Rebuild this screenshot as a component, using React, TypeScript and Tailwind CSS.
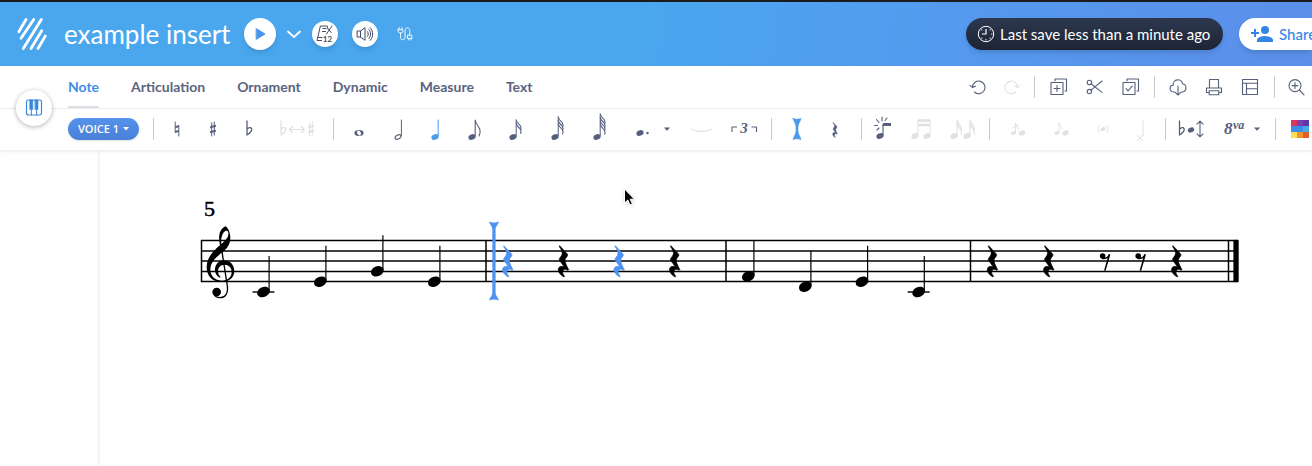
import type { ReactNode } from 'react';

const BLUE = '#4f93f2';

// Every glyph is drawn around its own centre in a 40x40 box.
function Glyph({ children }: { children: ReactNode }) {
  return (
    <svg
      viewBox="-20 -20 40 40"
      className="h-10 w-10 shrink-0 overflow-visible"
      fill="none"
      stroke="currentColor"
      strokeLinecap="round"
      strokeLinejoin="round"
      aria-hidden="true"
    >
      {children}
    </svg>
  );
}

interface ToolProps {
  label: string;
  width?: string;
  disabled?: boolean;
  active?: boolean;
  children: ReactNode;
}

function Tool({ label, width = 'w-9', disabled, active, children }: ToolProps) {
  const color = disabled ? 'text-[#e0e1e4]' : active ? 'text-[#4a9bea]' : 'text-[#56607c]';
  return (
    <button
      type="button"
      aria-label={label}
      disabled={disabled}
      className={`flex h-10 shrink-0 items-center justify-center ${width} ${color}`}
    >
      <Glyph>{children}</Glyph>
    </button>
  );
}

function Separator({ width = 'w-3' }: { width?: string }) {
  return (
    <div className={`flex shrink-0 justify-center ${width}`}>
      <div className="h-[22px] w-px bg-[#c9cbd1]" />
    </div>
  );
}

function Head({ x = 0, y = 0, size = 1 }: { x?: number; y?: number; size?: number }) {
  return (
    <ellipse
      rx={3.7 * size}
      ry={2.7 * size}
      transform={`translate(${x} ${y}) rotate(-22)`}
      fill="currentColor"
      stroke="none"
    />
  );
}

function Caret() {
  return <path d="M-3 -1.4H3L0 1.8Z" fill="currentColor" stroke="none" />;
}

function Flat({ x = 0 }: { x?: number }) {
  return (
    <path
      transform={`translate(${x} 0)`}
      d="M-2 -8V6C1 4 3.4 1.8 2.6 -.4C1.8 -2 -.8 -1.4 -2 .4"
      strokeWidth="1.3"
    />
  );
}

function Sharp({ x = 0 }: { x?: number }) {
  return (
    <g transform={`translate(${x} 0)`}>
      <path d="M-1.3 -6.2V7M1.3 -7V6.2" strokeWidth="1" />
      <path d="M-2.9 -1.6L2.9 -3.2M-2.9 3.2L2.9 1.6" strokeWidth="2" strokeLinecap="butt" />
    </g>
  );
}

function FlaggedNote({ flags, top }: { flags: number; top: number }) {
  return (
    <>
      <Head x={-3} y={8} />
      <path d={`M.2 7V${top}`} strokeWidth="1" />
      {Array.from({ length: flags }).map((_, i) => (
        <path
          key={i}
          d={`M.3 ${top + i * 3.4}C1 ${top + 4 + i * 3.4} 4 ${top + 4 + i * 3.4} 4.8 ${top + 7 + i * 3.4}C5.2 ${top + 8 + i * 3.4} 5.2 ${top + 9 + i * 3.4} 4.6 ${top + 10 + i * 3.4}`}
          strokeWidth="1.1"
        />
      ))}
    </>
  );
}

const REST_PATH =
  'M-11 -47L12 -22C14 -19 13 -16 10 -13C2 -4 4 2 16 25L14 27C6 22 0 24 -2 30C-3 36 0 41 4 45L2 47C-10 41 -16 31 -15 23C-13 15 -5 13 3 17L-10 -1C-13 -5 -13 -7 -9 -12C0 -22 -2 -30 -12 -44Z';

function TopBar() {
  return (
    <header className="flex h-16 items-center bg-[linear-gradient(100deg,#4aa7ee_0%,#4aa7ee_48%,#5598ee_76%,#5b8fea_100%)] pl-4 text-white">
      <a href="#" aria-label="Home" className="mr-4 flex w-8 shrink-0 items-center justify-center">
        <svg viewBox="0 0 32 34" className="h-[34px] w-8" fill="none" stroke="#fff" strokeWidth="2.8" strokeLinecap="round" aria-hidden="true">
          <path d="M10 2.500L2.800 14.700M17.700 2.500L5 21.300M25.300 2.500L7.300 31.500M25.700 13.700L15 31.500M29.300 19L22 31.500" />
        </svg>
      </a>
      <h1 className="w-[164px] shrink-0 whitespace-nowrap text-[26px] leading-8">example insert</h1>

      <button type="button" aria-label="Play" className="ml-4 flex size-8 shrink-0 items-center justify-center rounded-full bg-white text-[#4793ee] shadow-md">
        <Glyph>
          <path d="M-3.5 -5.2L5 0L-3.5 5.2Z" fill="currentColor" strokeWidth="1" />
        </Glyph>
      </button>
      <button type="button" aria-label="Playback options" className="flex w-9 shrink-0 items-center justify-center">
        <Glyph>
          <path d="M-6 -2.5L0 3L6 -2.5" strokeWidth="1.8" />
        </Glyph>
      </button>
      <button type="button" aria-label="Metronome" className="flex size-[26px] shrink-0 items-center justify-center rounded-full bg-white text-[#414a66] shadow-md">
        <Glyph>
          <path d="M-3.500 6.500H-8L-4.600 -8H2.200L3 -5M-6.800 3.500H-3M-2 -5.500H1M-2.500 -2.500H.5M7 -8L1.500 0M3.400 -4.800L6.200 -1.500" strokeWidth="1" />
          <text x="-2.2" y="8.2" fontSize="8" fontWeight="700" fill="currentColor" stroke="none">12</text>
        </Glyph>
      </button>
      <button type="button" aria-label="Volume" className="ml-[14px] flex size-[26px] shrink-0 items-center justify-center rounded-full bg-white text-[#414a66] shadow-md">
        <Glyph>
          <path d="M-7.5 -3H-4.5L0 -6.3V6.3L-4.5 3H-7.5ZM-4.5 -3V3M2.4 -2.4C3.6 -1 3.6 1 2.4 2.4M3.8 -4.6C6.2 -2 6.2 2 3.8 4.6M5.2 -6.4C8.5 -3 8.5 3 5.2 6.4" strokeWidth="1" />
        </Glyph>
      </button>
      <button type="button" aria-label="MIDI device" className="ml-[11px] flex w-8 shrink-0 items-center justify-center text-white/90">
        <Glyph>
          <path d="M-6 -6.5V-4.5M-3 -6.5V-4.5M-6.8 -4.3H-2.2V-2C-2.2 -.8 -6.8 -.8 -6.8 -2ZM-4.5 -1V3.5C-4.5 6.5 0 6.5 0 3.5V-3.5C0 -7 4.8 -7 4.8 -3.5V.8M2.8 1.2H6.8V4.4H2.8ZM3.6 4.6V6M6 4.6V6" strokeWidth="1" />
        </Glyph>
      </button>

      <div className="ml-auto flex shrink-0 items-center gap-4">
        <div className="flex h-8 w-[257px] items-center gap-1.5 whitespace-nowrap rounded-full bg-linear-to-b from-[#2d3850] to-[#1d2434] pl-3 text-[15px] shadow-md">
          <svg viewBox="-8 -8 16 16" className="size-4 shrink-0 overflow-visible" fill="none" stroke="#fff" aria-hidden="true">
            <circle r="7.7" strokeWidth="1" />
            <path d="M0 -5V0H-4" strokeWidth="1.2" />
            <path d="M4.2 -4.2L4.3 -4.1M5.6 0H5.8M4.1 4.1L4.2 4.2M0 5.6V5.8M-4.2 4.1L-4.1 4.2M-4.2 -4.2L-4.1 -4.1" strokeWidth="1.2" strokeLinecap="round" />
          </svg>
          Last save less than a minute ago
        </div>
        <button type="button" className="flex h-8 w-[73px] items-center gap-1.5 overflow-hidden whitespace-nowrap rounded-l-full bg-white pl-3 text-[15px] font-medium text-[#3585e6] shadow-md">
          <svg viewBox="0 0 22 16" className="h-4 w-[22px] shrink-0" fill="currentColor" aria-hidden="true">
            <circle cx="14" cy="4" r="4" />
            <path d="M6 16V14C6 11.3 11.3 10 14 10S22 11.3 22 14V16ZM3 3H5V6H8V8H5V11H3V8H0V6H3Z" />
          </svg>
          Share
        </button>
      </div>
    </header>
  );
}

const TABS = ['Note', 'Articulation', 'Ornament', 'Dynamic', 'Measure', 'Text'];

function TabRow() {
  return (
    <div className="flex h-[42px] items-center pl-[68px]">
      <nav className="flex h-full gap-8 text-[14px] font-bold text-[#5b6480]">
        {TABS.map((tab) => (
          <a
            key={tab}
            href="#"
            className={
              tab === 'Note'
                ? 'flex items-center border-b-2 border-[#dcdee3] text-[#3f8ee6]'
                : 'flex items-center border-b-2 border-transparent'
            }
          >
            {tab}
          </a>
        ))}
      </nav>
      <div className="ml-auto flex items-center">
        <Tool label="Undo">
          <path d="M-5.6 0A6.3 6.3 0 1 1 -3.6 5M-8 -1.6L-5.4 .6L-2.6 -1" strokeWidth="1.1" />
        </Tool>
        <Tool label="Redo" width="w-8" disabled>
          <path d="M5.6 0A6.3 6.3 0 1 0 3.6 5M8 -1.6L5.4 .6L2.6 -1" strokeWidth="1.1" />
        </Tool>
        <Separator />
        <Tool label="Duplicate">
          <path d="M-7 -4.5H5V7.5H-7ZM-3 -8H8.5V4H7M-3 -8V-6M-1 -1.5V4.5M-4 1.5H2" strokeWidth="1.1" />
        </Tool>
        <Tool label="Cut">
          <circle cx="-4.6" cy="-4.6" r="2.2" strokeWidth="1.1" />
          <circle cx="-4.6" cy="4.6" r="2.2" strokeWidth="1.1" />
          <path d="M-3 -3.2L8 5.4M-3 3.2L8 -6" strokeWidth="1.1" />
        </Tool>
        <Tool label="Select all">
          <path d="M-7 -4.5H5V7.5H-7ZM-3 -8H8.5V4H7M-3 -8V-6M-4 1.5L-2 3.8L2.2 -.8" strokeWidth="1.1" />
        </Tool>
        <Separator />
        <Tool label="Export">
          <path d="M-3.2 5H-4.5C-9 4.5 -9 -1.5 -4.8 -1.8C-5.6 -8 3.8 -9.4 4.6 -3C9 -3 9 4.6 4.6 5H3.2M0 -1V8M-2.6 5.6L0 8L2.6 5.6" strokeWidth="1.1" />
        </Tool>
        <Tool label="Print">
          <path d="M-4.5 1V-7.5H4.5V1M-7.5 1H7.5V5.5H5M-7.5 1V5.5H-5M-4.8 3.8H4.8V7.8H-4.8Z" strokeWidth="1.1" />
        </Tool>
        <Tool label="Layout">
          <path d="M-7.5 -7.5H7.5V7.5H-7.5ZM-7.5 -3.8H7.5M-3.5 -3.8V7.5M-3.5 1.8H7.5" strokeWidth="1.1" />
        </Tool>
        <Separator />
        <Tool label="Zoom in" width="w-8">
          <circle cx="-1" cy="-1.4" r="6" strokeWidth="1.1" />
          <path d="M3.4 3L8 7.8M-1 -4.4V1.6M-4 -1.4H2" strokeWidth="1.1" />
        </Tool>
      </div>
    </div>
  );
}

const PALETTE = [
  '#d8365c', '#7e3db0', '#5a3aa6',
  '#3a8ce8', '#3a8ce8', '#45aee0',
  '#ffdd50', '#ee9233', '#e85c2a',
];

function NoteRow() {
  return (
    <div className="flex h-10 items-center border-t border-[#ececee] box-content pl-[68px]">
      <div className="relative mr-2 shrink-0">
        <select
          aria-label="Voice"
          className="block h-[22px] w-[71px] appearance-none rounded-full bg-linear-to-b from-[#5593ea] to-[#4a7fd8] pl-2.5 font-['Open_Sans',sans-serif] text-[11px] font-semibold uppercase leading-[22px] text-white shadow-sm"
        >
          <option>VOICE 1</option>
        </select>
        <svg viewBox="0 0 6 4" className="pointer-events-none absolute right-2.5 top-[9px] h-1 w-1.5" fill="#fff" aria-hidden="true">
          <path d="M0 0H6L3 3.5Z" />
        </svg>
      </div>
      <Separator />
      <Tool label="Natural">
        <path d="M-1.8 -7V3.6M1.8 -3.6V7" strokeWidth="1" />
        <path d="M-1.8 -1.8L1.8 -2.9M-1.8 3L1.8 1.9" strokeWidth="2" strokeLinecap="butt" />
      </Tool>
      <Tool label="Sharp">
        <Sharp />
      </Tool>
      <Tool label="Flat">
        <Flat />
      </Tool>
      <Tool label="Enharmonic" width="w-15" disabled>
        <Flat x={-14} />
        <path d="M-7.5 .5H7.5M-4.5 -2.5L-7.5 .5L-4.5 3.5M4.5 -2.5L7.5 .5L4.5 3.5" strokeWidth="1.1" />
        <Sharp x={14} />
      </Tool>
      <Separator />
      <Tool label="Whole note" width="w-10">
        <path d="M-4.6 4A4.6 3 0 1 0 4.6 4A4.6 3 0 1 0 -4.6 4ZM-1.9 2.8A1.7 2.3 -30 0 1 1.9 5.2A1.7 2.3 -30 0 1 -1.9 2.8Z" fill="currentColor" fillRule="evenodd" stroke="none" />
      </Tool>
      <Tool label="Half note" width="w-9">
        <ellipse rx="3.2" ry="2" transform="translate(1 8) rotate(-28)" strokeWidth="1.2" />
        <path d="M4.4 6.5V-9" strokeWidth="1" />
      </Tool>
      <Tool label="Quarter note" width="w-10" active>
        <Head x={0} y={8} />
        <path d="M3.2 7V-9" strokeWidth="1" />
      </Tool>
      <Tool label="Eighth note" width="w-10">
        <Head x={-3} y={8} />
        <path d="M.2 7V-9C1 -4 4 -3 5 1C5.4 3 5 5 4 7" strokeWidth="1.1" />
      </Tool>
      <Tool label="16th note" width="w-10.5">
        <FlaggedNote flags={2} top={-9} />
      </Tool>
      <Tool label="32nd note" width="w-10.5">
        <FlaggedNote flags={3} top={-12} />
      </Tool>
      <Tool label="64th note" width="w-10.5">
        <FlaggedNote flags={4} top={-15} />
      </Tool>
      <Tool label="Dotted" width="w-10.5">
        <Head x={-2} y={4} />
        <circle cx="5.5" cy="4" r="1.2" fill="currentColor" stroke="none" />
      </Tool>
      <Tool label="More dots" width="w-2">
        <Caret />
      </Tool>
      <Tool label="Tie" width="w-15" disabled>
        <path d="M-10 0C-5 3.6 6 3.6 11 0C6 2.8 -5 2.8 -10 0Z" fill="currentColor" strokeWidth=".6" />
      </Tool>
      <Tool label="Triplet" width="w-7">
        <path d="M-13 3V-2H-8M6.5 -2H11.5V3" strokeWidth="1.1" strokeLinecap="butt" />
        <text x="-1" y="4" textAnchor="middle" fontSize="15" fontWeight="700" fontStyle="italic" fill="currentColor" stroke="none" className="font-['Liberation_Serif',serif]">3</text>
      </Tool>
      <Separator width="w-6" />
      <Tool label="Insert mode" width="w-8" active>
        <path d="M-6 -10.5C-3 -9.5 -1 -9.5 2 -10.5C1 -7 -1 -5 -1 -2V2C-1 5 1 7 2 10.5C-1 9.5 -3 9.5 -6 10.5C-5 7 -3 5 -3 2V-2C-3 -5 -5 -7 -6 -10.5Z" fill="currentColor" strokeWidth=".6" />
      </Tool>
      <Tool label="Rest" width="w-10">
        <path d={REST_PATH} transform="translate(0 1) scale(.16)" fill="currentColor" stroke="currentColor" strokeWidth="2" />
      </Tool>
      <Separator />
      <Tool label="Break beam" width="w-8">
        <Head x={-3} y={7} />
        <path d="M0 6V-4.5" strokeWidth="1.2" />
        <path d="M0 -4.5H8" strokeWidth="3" strokeLinecap="butt" />
        <path d="M-1 -8V-12M-4 -6.5L-6.5 -9.5M-5.5 -3.5H-8.5M-4 -1L-6 1M2 -8.5L4 -11" strokeWidth="1.1" />
      </Tool>
      <Tool label="Join beam" width="w-10.5" disabled>
        <Head x={-5} y={7} />
        <Head x={7} y={7} />
        <path d="M-2 6V-8.5M10 6V-8.5" strokeWidth="1" />
        <path d="M-2 -8.5H10M-2 -4H10" strokeWidth="2.4" strokeLinecap="butt" />
      </Tool>
      <Tool label="Separate beam" width="w-10.5" disabled>
        <Head x={-8} y={7} />
        <Head x={5} y={7} />
        <path d="M-5 6V-9C-4 -5 0 -4 -.5 2M-5 -5C-4 -1 0 -1 -.5 5M8 6V-9C9 -5 13 -4 12.5 2M8 -5C9 -1 13 -1 12.5 5" strokeWidth="1.2" />
      </Tool>
      <Separator />
      <Tool label="Acciaccatura" width="w-11" disabled>
        <Head x={-3.5} y={4} size={0.7} />
        <Head x={5} y={4} size={0.9} />
        <path d="M-1.5 3V-6C-1 -3 1.5 -3 1.5 0M-4 -1L1 -4" strokeWidth="1" />
      </Tool>
      <Tool label="Appoggiatura" width="w-11" disabled>
        <Head x={-4} y={4} size={0.7} />
        <Head x={4.5} y={4} size={0.9} />
        <path d="M-2 3V-6C-1.5 -3 1 -3 1 0" strokeWidth="1" />
      </Tool>
      <Tool label="Ghost note" width="w-10" disabled>
        <Head size={0.7} />
        <path d="M-3.5 -3.5C-5.5 -1.5 -5.5 1.5 -3.5 3.5M3.5 -3.5C5.5 -1.5 5.5 1.5 3.5 3.5" strokeWidth="1" />
      </Tool>
      <Tool label="Cross note head" width="w-9" disabled>
        <path d="M2 7V-9M-3.5 6.5L1.5 11.5M1.5 6.5L-3.5 11.5" strokeWidth="1" />
      </Tool>
      <Separator />
      <Tool label="Move accidental" width="w-10">
        <Flat x={-9.5} />
        <Head x={0} y={1} size={0.9} />
        <path d="M9 -7.5V7.5M6 -4.8L9 -7.8L12 -4.8M6 4.8L9 7.8L12 4.8" strokeWidth="1.1" />
      </Tool>
      <Tool label="Ottava" width="w-10.5">
        <text x="-8" y="5" fontSize="17" fontWeight="700" fontStyle="italic" fill="currentColor" stroke="none" className="font-['Liberation_Serif',serif]">8</text>
        <text x="1" y="0" fontSize="12" fontWeight="700" fontStyle="italic" fill="currentColor" stroke="none" className="font-['Liberation_Serif',serif]">va</text>
      </Tool>
      <Tool label="More octaves" width="w-2">
        <Caret />
      </Tool>
      <Separator width="w-7" />
      <button type="button" aria-label="Note colors" className="ml-0.5 grid w-[18px] shrink-0 grid-cols-3">
        {PALETTE.map((color, i) => (
          <span key={i} className="size-1.5" style={{ backgroundColor: color }} />
        ))}
      </button>
    </div>
  );
}

const STAFF_LINES = [240.5, 251, 261, 271.5, 281.5];
const BARLINES = [201.5, 486, 726, 970.5, 1228.5];

const NOTES = [
  { x: 263.5, y: 292 },
  { x: 320.3, y: 281.7 },
  { x: 377.3, y: 271.3 },
  { x: 434.3, y: 281.7 },
  { x: 748.3, y: 276.3 },
  { x: 805.3, y: 286.7 },
  { x: 862, y: 281.7 },
  { x: 918.7, y: 292 },
];

const QUARTER_RESTS = [
  { x: 507.6, selected: true },
  { x: 563.3 },
  { x: 619, selected: true },
  { x: 674.5 },
  { x: 992.3 },
  { x: 1048.6 },
  { x: 1176.6 },
];

const EIGHTH_RESTS = [1105, 1140.6];

function Score() {
  return (
    <svg viewBox="200 186 1040 120" className="block h-auto w-full overflow-visible" role="img" aria-label="Score, from measure 5">
      <text x="204" y="216" fontSize="22" stroke="#000" strokeWidth=".5" className="font-['Liberation_Serif',serif]">5</text>

      <g stroke="#000">
        {STAFF_LINES.map((y) => (
          <path key={y} d={`M201 ${y}H1238`} strokeWidth="1.3" />
        ))}
        {BARLINES.map((x) => (
          <path key={x} d={`M${x} 240V282`} strokeWidth="1.5" />
        ))}
      </g>
      <path d="M1233.4 239.9H1238.7V282.1H1233.4Z" />

      <g transform="translate(190 190) scale(.3333)">
        <path
          fillRule="evenodd"
          d="M90 263C78 257 74 247 75 236C77 221 88 211 102 211C120 211 133 225 133 243C133 263 117 276 94 276C66 276 50 257 50 232C50 205 66 186 90 166C84 140 88 118 106 109C114 112 121 128 121 144C121 166 108 178 97 187C78 202 62 215 61 238C61 259 75 271 95 272C113 272 125 261 125 246C125 233 116 224 104 224C92 224 84 233 84 243C84 252 88 258 92 261ZM94 162C105 152 117 142 115 128C114 122 110 121 106 123C97 128 92 145 94 162Z"
        />
        <path d="M93 166L112 288C115 310 106 323 91 323C80 323 74 318 72 312" fill="none" stroke="#000" strokeWidth="4" />
        <circle cx="80" cy="306" r="13" />
      </g>

      {NOTES.map(({ x, y }) => (
        <g key={x}>
          <ellipse rx="6.6" ry="5" transform={`translate(${x} ${y}) rotate(-24)`} />
          <path d={`M${x + 5.6} ${y - 1}V${y - 36}`} stroke="#000" strokeWidth="1.2" />
          {y > 290 && <path d={`M${x - 11} ${y}H${x + 11}`} stroke="#000" strokeWidth="1.4" />}
        </g>
      ))}

      {QUARTER_RESTS.map(({ x, selected }) => (
        <path
          key={x}
          d={REST_PATH}
          transform={`translate(${x} 261.3) scale(.3333)`}
          fill={selected ? BLUE : '#000'}
          stroke={selected ? BLUE : '#000'}
          strokeWidth="2"
        />
      ))}

      {EIGHTH_RESTS.map((x) => (
        <g key={x} transform={`translate(${x} 262)`}>
          <circle cx="-2.4" cy="-6" r="2.8" />
          <path d="M-3 -3.8C0 -3.2 3.5 -4.5 4.6 -7.8L-.2 8.6" fill="none" stroke="#000" strokeWidth="1.6" />
        </g>
      ))}

      {/* insertion cursor */}
      <path
        d="M489 221.5C492 223 496 223 499 221.5C498 225 495.600 226.500 495.600 229V293C495.600 295.500 498 297 499 300.500C496 299 492 299 489 300.500C490 297 492.300 295.500 492.300 293V229C492.300 226.500 490 225 489 221.500Z"
        fill={BLUE}
      />

      {/* mouse pointer */}
      <path
        d="M624.5 189V203L627.8 200L630 205L632.4 204L630.2 199.2H634.5Z"
        stroke="#fff"
        strokeWidth="1"
        className="drop-shadow-sm"
      />
    </svg>
  );
}

export default function App() {
  return (
    <div className="flex min-h-screen flex-col overflow-hidden bg-white font-['Lato',sans-serif]">
      <div className="h-0.5 bg-[#1c1c1e]" />
      <TopBar />
      <div className="relative z-10 bg-white pb-px shadow-[0_1px_3px_rgba(0,0,0,0.1)]">
        <TabRow />
        <NoteRow />
        <button
          type="button"
          aria-label="Toggle piano keyboard"
          className="absolute left-4 top-6 flex size-9 items-center justify-center rounded-full bg-white text-[#3a86d8] shadow-[0_1px_5px_rgba(0,0,0,0.3)]"
        >
          <Glyph>
            <rect x="-7.5" y="-8" width="15" height="15" rx="2" strokeWidth="1.2" />
            <path d="M-2.6 2V7M2.6 2V7" strokeWidth="1" />
            <path d="M-4 -8H-1.2V1.500H-4ZM1.200 -8H4V1.500H1.200Z" fill="currentColor" strokeWidth=".6" />
          </Glyph>
        </button>
      </div>
      <main className="flex grow">
        <div className="w-[100px] shrink-0 bg-[#fefefe]" />
        <div className="grow bg-white pl-[100px] pr-[72px] pt-9 shadow-[0_0_4px_rgba(0,0,0,0.12)]">
          <Score />
        </div>
      </main>
    </div>
  );
}
